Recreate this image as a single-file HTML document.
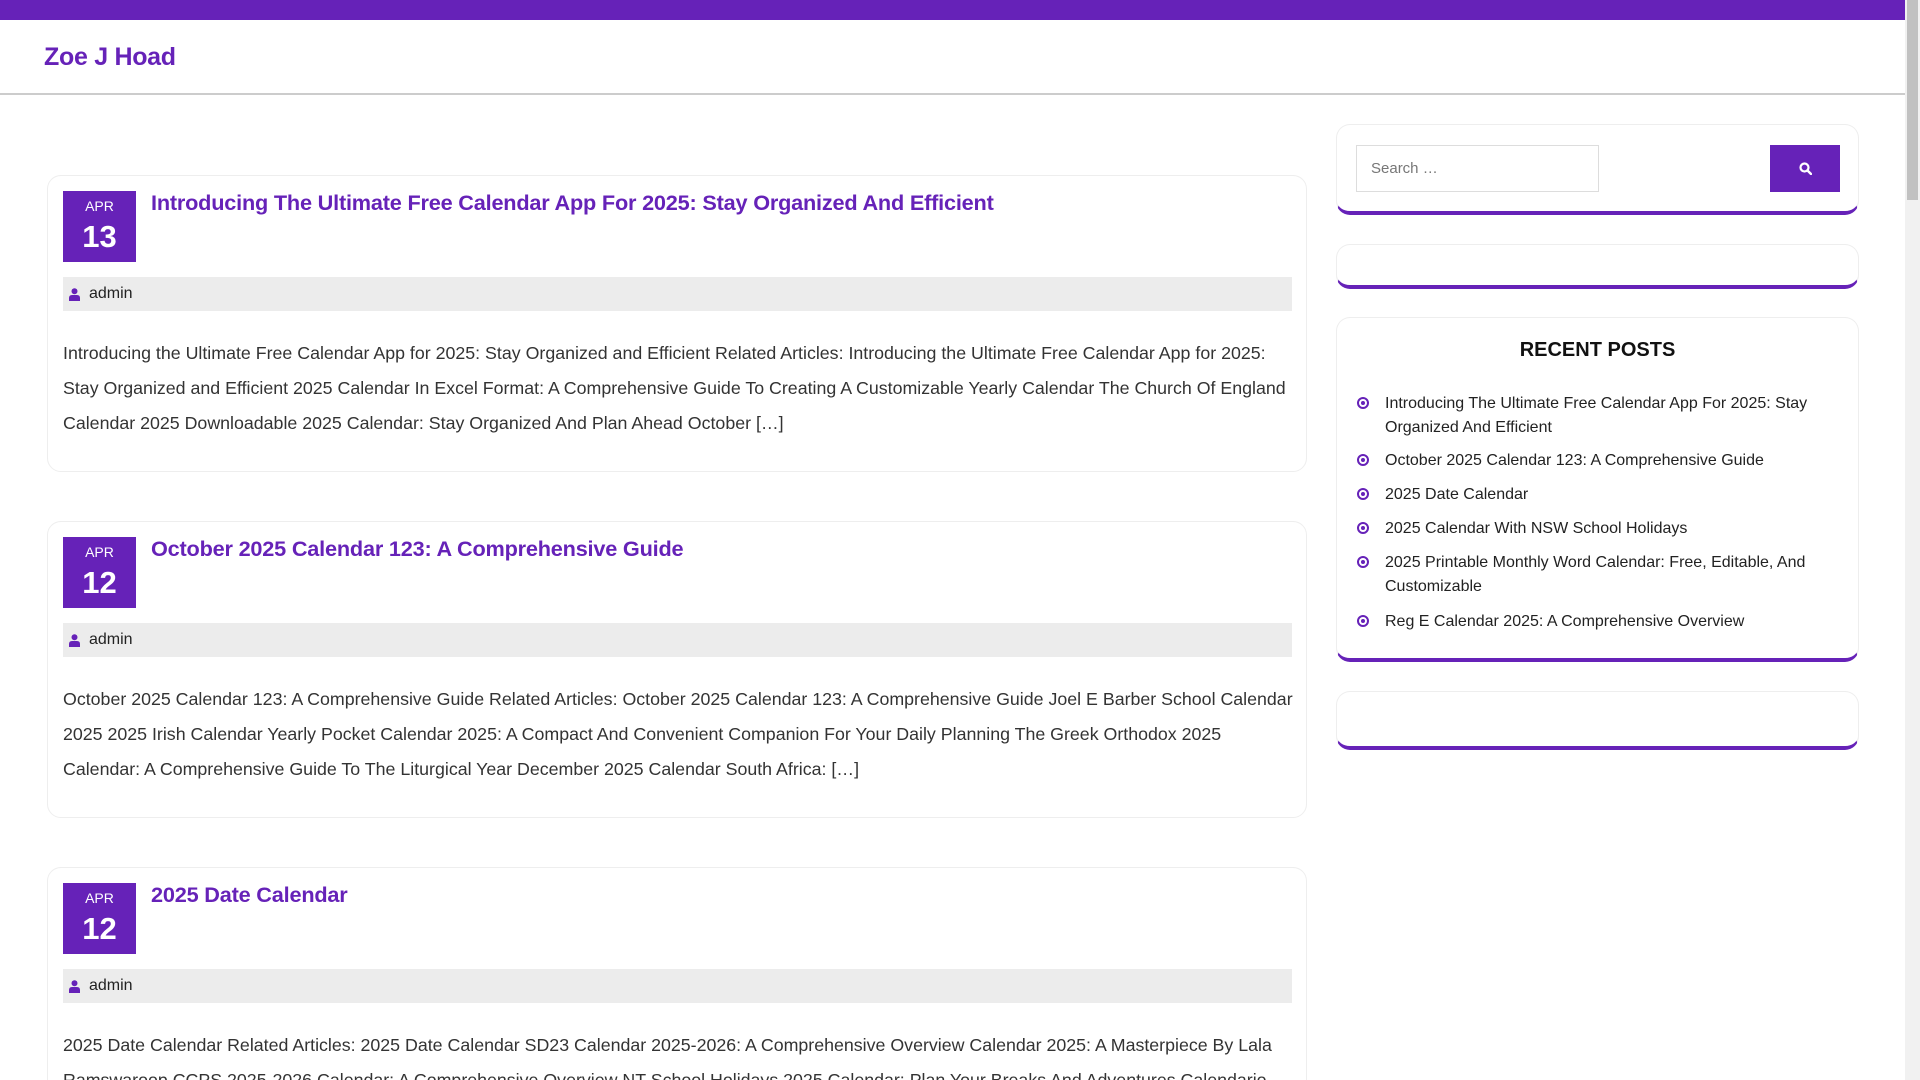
<!DOCTYPE html>
<html style="width:1920px;height:1080px;overflow:hidden"><head><meta charset="utf-8"><style>
*{box-sizing:border-box;margin:0;padding:0}
body{width:1920px;height:1080px;overflow:hidden;background:#fff;font-family:"Liberation Sans",sans-serif;color:#333;position:relative}
.top{position:absolute;left:0;top:0;width:1905px;height:20px;background:#6622b8}
.hdr{position:absolute;left:0;top:20px;width:1905px;height:75px;border-bottom:2px solid #ccc}
.logo{position:absolute;left:44px;top:23px;font-size:25px;font-weight:bold;color:#6622b8;letter-spacing:-0.3px}
.sb{position:absolute;right:0;top:0;width:15px;height:1080px;background:#f1f1f1}
.sb div{position:absolute;left:2px;top:0;width:11px;height:200px;background:#c1c1c1}
.card{position:absolute;left:47px;width:1260px;border:1px solid #eee;border-radius:14px;background:#fff}
.date{position:absolute;left:15px;top:15px;width:73px;height:71px;background:#6622b8;color:#fff;text-align:center}
.date .m{font-size:14px;margin-top:7px}
.date .d{font-size:31px;font-weight:bold;margin-top:5px}
.ttl{position:absolute;left:103px;top:14px;font-size:21.7px;font-weight:bold;color:#6622b8;white-space:nowrap;letter-spacing:-0.2px}
.meta{position:absolute;left:15px;top:101px;width:1229px;height:34px;background:#ececec;font-size:16px;line-height:34px;padding-left:26px;color:#222}
.meta svg{position:absolute;left:6px;top:11px}
.ex{position:absolute;left:15px;top:160px;font-size:17.8px;line-height:35px;color:#333;white-space:nowrap}
.w{position:absolute;left:1336px;width:523px;border:1px solid #eee;border-bottom:4px solid #6622b8;border-radius:14px;background:#fff}
.inp{position:absolute;left:19px;top:20px;width:243px;height:47px;border:1px solid #ddd;font-size:15px;color:#777;line-height:45px;padding-left:14px}
.btn{position:absolute;left:433px;top:20px;width:70px;height:47px;background:#6622b8}
.btn svg{position:absolute;left:29px;top:17px}
.rh{position:absolute;top:21px;width:100%;text-align:center;font-size:20px;font-weight:bold;color:#111}
.li{position:absolute;left:48px;font-size:16px;line-height:24px;color:#222;width:440px}
.li i{position:absolute;left:-28px;top:5px;width:12px;height:12px;border:2px solid #6622b8;border-radius:50%}
.li i:after{content:"";position:absolute;left:2px;top:2px;width:4px;height:4px;background:#6622b8;border-radius:50%}
</style></head><body>
<div class="top"></div>
<div class="hdr"><div class="logo">Zoe J Hoad</div></div>
<div class="sb"><div></div></div>

<div class="card" style="top:175px;height:297px">
<div class="date"><div class="m">APR</div><div class="d">13</div></div>
<div class="ttl">Introducing The Ultimate Free Calendar App For 2025: Stay Organized And Efficient</div>
<div class="meta"><svg width="11" height="13" viewBox="0 0 11 13"><circle cx="5.5" cy="3.3" r="3" fill="#6622b8"/><path d="M0 13V10Q0 7 3 7H8Q11 7 11 10V13Z" fill="#6622b8"/></svg>admin</div>
<div class="ex">Introducing the Ultimate Free Calendar App for 2025: Stay Organized and Efficient Related Articles: Introducing the Ultimate Free Calendar App for 2025:<br>Stay Organized and Efficient 2025 Calendar In Excel Format: A Comprehensive Guide To Creating A Customizable Yearly Calendar The Church Of England<br>Calendar 2025 Downloadable 2025 Calendar: Stay Organized And Plan Ahead October […]</div>
</div>

<div class="card" style="top:521px;height:297px">
<div class="date"><div class="m">APR</div><div class="d">12</div></div>
<div class="ttl">October 2025 Calendar 123: A Comprehensive Guide</div>
<div class="meta"><svg width="11" height="13" viewBox="0 0 11 13"><circle cx="5.5" cy="3.3" r="3" fill="#6622b8"/><path d="M0 13V10Q0 7 3 7H8Q11 7 11 10V13Z" fill="#6622b8"/></svg>admin</div>
<div class="ex">October 2025 Calendar 123: A Comprehensive Guide Related Articles: October 2025 Calendar 123: A Comprehensive Guide Joel E Barber School Calendar<br>2025 2025 Irish Calendar Yearly Pocket Calendar 2025: A Compact And Convenient Companion For Your Daily Planning The Greek Orthodox 2025<br>Calendar: A Comprehensive Guide To The Liturgical Year December 2025 Calendar South Africa: […]</div>
</div>

<div class="card" style="top:867px;height:297px">
<div class="date"><div class="m">APR</div><div class="d">12</div></div>
<div class="ttl">2025 Date Calendar</div>
<div class="meta"><svg width="11" height="13" viewBox="0 0 11 13"><circle cx="5.5" cy="3.3" r="3" fill="#6622b8"/><path d="M0 13V10Q0 7 3 7H8Q11 7 11 10V13Z" fill="#6622b8"/></svg>admin</div>
<div class="ex">2025 Date Calendar Related Articles: 2025 Date Calendar SD23 Calendar 2025-2026: A Comprehensive Overview Calendar 2025: A Masterpiece By Lala<br>Ramswaroop CCPS 2025-2026 Calendar: A Comprehensive Overview NT School Holidays 2025 Calendar: Plan Your Breaks And Adventures Calendario</div>
</div>

<div class="w" style="top:124px;height:91px">
<div class="inp">Search …</div>
<div class="btn"><svg width="13" height="13" viewBox="0 0 13 13"><circle cx="5.5" cy="5.5" r="4" fill="none" stroke="#fff" stroke-width="2.2"/><path d="M8.5 8.5L12 12" stroke="#fff" stroke-width="2.4" stroke-linecap="round"/></svg></div>
</div>
<div class="w" style="top:244px;height:45px"></div>
<div class="w" style="top:317px;height:345px">
<div class="rh">RECENT POSTS</div>
<div class="li" style="top:74px"><i></i>Introducing The Ultimate Free Calendar App For 2025: Stay Organized And Efficient</div>
<div class="li" style="top:131px"><i></i>October 2025 Calendar 123: A Comprehensive Guide</div>
<div class="li" style="top:165px"><i></i>2025 Date Calendar</div>
<div class="li" style="top:199px"><i></i>2025 Calendar With NSW School Holidays</div>
<div class="li" style="top:233px"><i></i>2025 Printable Monthly Word Calendar: Free, Editable, And Customizable</div>
<div class="li" style="top:292px"><i></i>Reg E Calendar 2025: A Comprehensive Overview</div>
</div>
<div class="w" style="top:691px;height:59px"></div>
</body></html>
